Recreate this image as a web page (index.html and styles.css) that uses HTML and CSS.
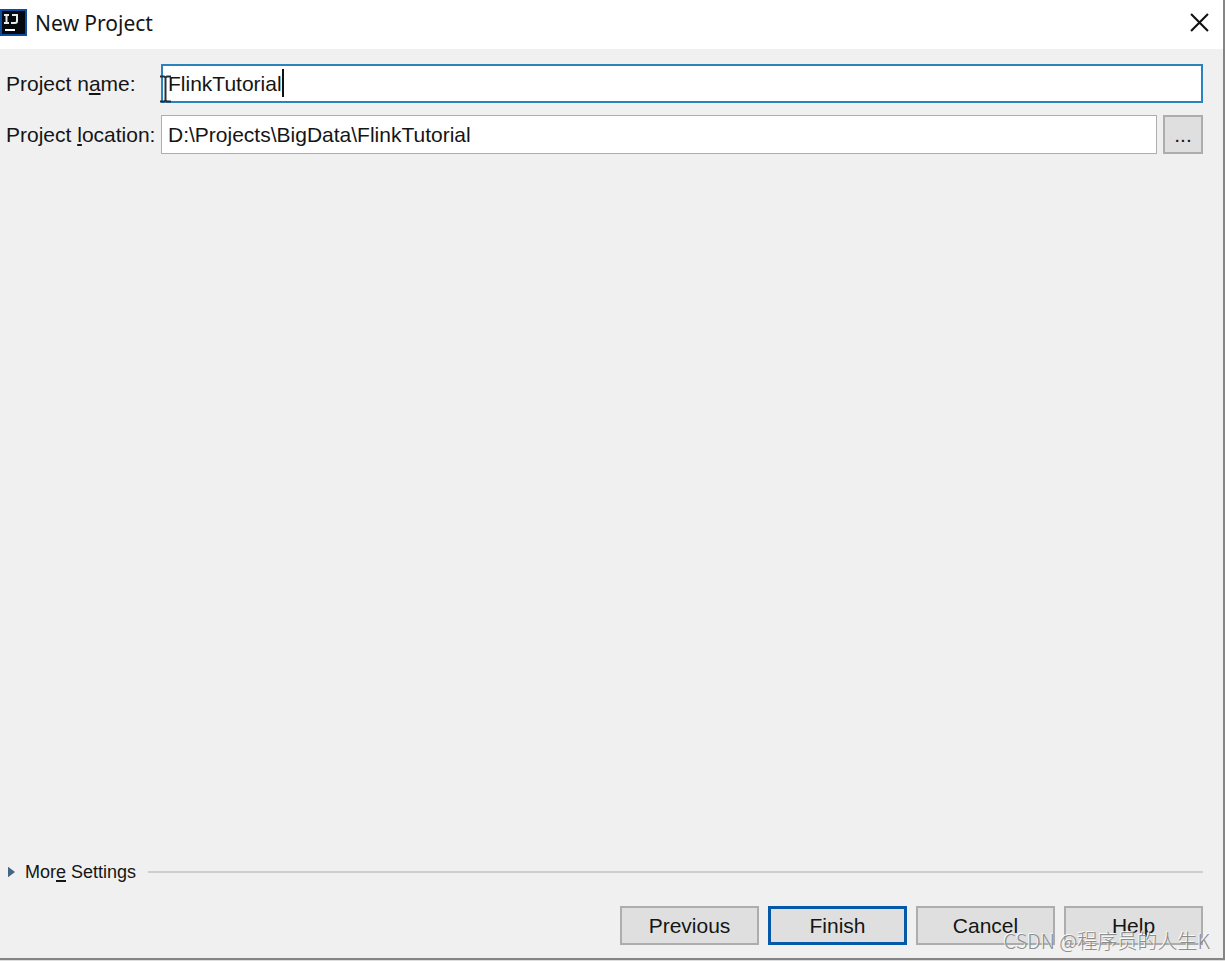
FILE: index.html
```
<!DOCTYPE html>
<html lang="en">
<head>
  <meta charset="UTF-8" />
  <meta name="viewport" content="width=device-width, initial-scale=1.0" />
  <title>New Project</title>
  <link rel="stylesheet" href="styles.css">
</head>
<body>
  <div class="dialog">
    <header class="title-bar">
      <svg class="app-icon" viewBox="0 0 27 27" aria-hidden="true">
        <rect width="27" height="27" fill="#0b4da0" />
        <rect x="2" y="2" width="23" height="23" fill="#05080f" />
        <path d="M4 6h5M6.500 6v8M4 14h5M12 6h5v6q0 2-2 2h-4" fill="none" stroke="#e8e8e8" stroke-width="2" />
        <path d="M5 21h10" stroke="#fff" stroke-width="2" />
      </svg>
      <h1>New Project</h1>
      <button class="close" type="button" aria-label="Close">
        <svg viewBox="0 0 18 18" aria-hidden="true">
          <path d="M1 1l16 16M17 1L1 17" fill="none" stroke="#111" stroke-width="2" />
        </svg>
      </button>
    </header>

    <form class="content">
      <div class="fields">
        <label for="project-name">Project n<u>a</u>me:</label>
        <div class="name-field">
          <input type="text" id="project-name" class="active" value="FlinkTutorial" spellcheck="false" />
          <span class="caret"></span>
          <svg class="pointer" viewBox="0 0 11 28" aria-hidden="true">
            <path d="M0 1.500h4l1.500 1 1.500-1h4M0 26.500h4l1.500-1 1.500 1h4M5.500 2v24" fill="none" stroke="#22303c" stroke-width="2" />
          </svg>
        </div>

        <label for="project-location">Project <u>l</u>ocation:</label>
        <div class="location-field">
          <input type="text" id="project-location" value="D:\Projects\BigData\FlinkTutorial" spellcheck="false" />
          <button class="browse" type="button" aria-label="Browse">...</button>
        </div>
      </div>

      <button class="more" type="button" aria-expanded="false">
        <svg viewBox="0 0 8 12" aria-hidden="true">
          <path d="M0 0l8 6-8 6z" fill="#42677e" />
        </svg>
        <span>Mor<u>e</u> Settings</span>
      </button>

      <div class="actions">
        <button type="button">Previous</button>
        <button type="button" class="default">Finish</button>
        <button type="button">Cancel</button>
        <button type="button">Help</button>
      </div>
    </form>
  </div>
  <div class="watermark">CSDN @程序员的人生K</div>
</body>
</html>
```

FILE: styles.css
```
:root {
  --panel-bg: #f0f0f0;
  --button-bg: #dfdfdf;
  --border: #adadad;
  --accent: #2b83bd;
  --default-border: #0559a8;
  --text-color: #151515;
}

* {
  box-sizing: border-box;
  margin: 0;
  padding: 0;
}

body {
  position: relative;
  min-height: 100vh;
  padding-bottom: 1px;
  display: flex;
  background-color: #dedede;
  color: var(--text-color);
  font-family: "Liberation Sans", Arial, sans-serif;
  font-size: 21px;
}

button,
input {
  font: inherit;
  color: inherit;
}

u {
  text-decoration-thickness: 2px;
  text-underline-offset: 2px;
}

.dialog {
  flex: 1;
  display: flex;
  flex-direction: column;
  border-right: 2px solid #858585;
  border-bottom: 2px solid #858585;
  background-color: var(--panel-bg);
}

/* Title bar */
.title-bar {
  display: flex;
  align-items: center;
  height: 49px;
  padding: 0 14px 4px 0;
  background-color: #fff;
}

.app-icon {
  width: 27px;
  height: 27px;
}

.title-bar h1 {
  flex: 1;
  padding-left: 8px;
  font-family: "Noto Sans", sans-serif;
  font-size: 21px;
  font-weight: 400;
}

.close {
  display: flex;
  border: none;
  background: none;
}

.close svg {
  width: 19px;
  height: 19px;
}

/* Form */
.content {
  flex: 1;
  display: flex;
  flex-direction: column;
  padding: 15px 20px 13px 6px;
}

.fields {
  display: grid;
  grid-template-columns: 149px 1fr;
  column-gap: 6px;
  row-gap: 12px;
  align-items: center;
}

.fields label {
  white-space: nowrap;
}

.name-field {
  position: relative;
  display: flex;
}

.location-field {
  display: flex;
  gap: 6px;
}

.fields input {
  flex: 1;
  min-width: 0;
  height: 39px;
  padding: 0 6px;
  border: 1px solid var(--border);
  background-color: #fff;
  outline: none;
}

.fields input.active {
  padding: 0 5px;
  border: 2px solid var(--accent);
}

/* Text caret and mouse pointer lie over the field */
.caret {
  position: absolute;
  top: 5px;
  left: 121px;
  width: 2px;
  height: 28px;
  background-color: #111;
}

.pointer {
  position: absolute;
  top: 11px;
  left: -1px;
  width: 11px;
  height: 28px;
}

.browse {
  width: 40px;
  border: 2px solid var(--border);
  background-color: var(--button-bg);
}

.more {
  display: flex;
  align-items: center;
  margin-top: auto;
  margin-bottom: 22px;
  padding-left: 2px;
  border: none;
  background: none;
  font-size: 18px;
  line-height: 24px;
}

.more svg {
  width: 7px;
  height: 12px;
  margin-right: 10px;
}

.more::after {
  content: '';
  flex: 1;
  height: 2px;
  margin-left: 12px;
  background-color: #cecece;
}

.actions {
  display: flex;
  justify-content: flex-end;
  gap: 9px;
}

.actions button {
  width: 139px;
  height: 39px;
  border: 2px solid var(--border);
  background-color: var(--button-bg);
}

.actions .default {
  border: 3px solid var(--default-border);
}

.watermark {
  position: absolute;
  right: 15px;
  bottom: 6px;
  color: #8c8c8c;
  font-family: "Noto Sans CJK SC", sans-serif;
  font-size: 20px;
  font-weight: 300;
  line-height: 28px;
  text-shadow: -1px -1px 0 #fafafa;
  white-space: nowrap;
  pointer-events: none;
}
```
